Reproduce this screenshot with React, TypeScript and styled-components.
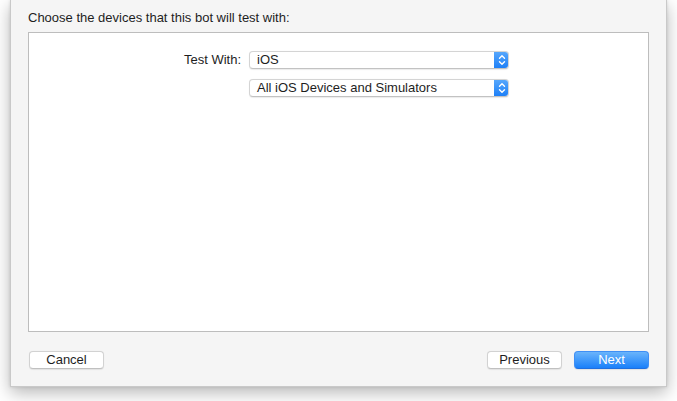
import { FC } from 'react'
import styled, { createGlobalStyle } from 'styled-components'

const GlobalStyle = createGlobalStyle`
  html, body {
    margin: 0;
    padding: 0;
    background: #ffffff;
  }
  body {
    font-family: 'Liberation Sans', Arial, sans-serif;
    color: #1e1e1e;
  }
`

interface PopupProps {
  value: string
}

const Stepper: FC = () => (
  <StepperBox>
    <svg width="8" height="12" viewBox="0 0 8 12" fill="none">
      <path d="M1.5 4.2 L4 1.7 L6.5 4.2" stroke="#fff" strokeWidth="1.4" strokeLinecap="round" strokeLinejoin="round" />
      <path d="M1.5 7.8 L4 10.3 L6.5 7.8" stroke="#fff" strokeWidth="1.4" strokeLinecap="round" strokeLinejoin="round" />
    </svg>
  </StepperBox>
)

const Popup: FC<PopupProps> = ({ value }) => (
  <PopupBox>
    <PopupText>{value}</PopupText>
    <Stepper />
  </PopupBox>
)

const App: FC = () => {
  return (
    <>
      <GlobalStyle />
      <Page>
        <Sheet>
          <Heading>Choose the devices that this bot will test with:</Heading>
          <Panel>
            <Form>
              <Label>Test With:</Label>
              <Popup value="iOS" />
              <span />
              <Popup value="All iOS Devices and Simulators" />
            </Form>
          </Panel>
          <Footer>
            <Button>Cancel</Button>
            <Spacer />
            <Button>Previous</Button>
            <Button primary>Next</Button>
          </Footer>
        </Sheet>
      </Page>
    </>
  )
}

const Page = styled.div`
  width: 677px;
  height: 401px;
  overflow: hidden;
  padding-left: 10px;
  box-sizing: border-box;
`

const Sheet = styled.div`
  width: 657px;
  height: 387px;
  box-sizing: border-box;
  display: flex;
  flex-direction: column;
  padding: 10px 17px 0 17px;
  background: #f5f5f5;
  border: 1px solid #c9c9c9;
  border-top: none;
  box-shadow: 0 6px 16px rgba(0, 0, 0, 0.28), 0 0 3px rgba(0, 0, 0, 0.12);
`

const Heading = styled.div`
  font-size: 13px;
  line-height: 16px;
  height: 16px;
  margin-bottom: 6px;
`

const Panel = styled.div`
  height: 300px;
  box-sizing: border-box;
  background: #ffffff;
  border: 1px solid #bdbdbd;
  padding-top: 18px;
`

const Form = styled.div`
  display: grid;
  grid-template-columns: 212px 260px;
  column-gap: 8px;
  row-gap: 10px;
  align-items: center;
`

const Label = styled.div`
  text-align: right;
  font-size: 13px;
  line-height: 18px;
`

const PopupBox = styled.div`
  display: flex;
  align-items: stretch;
  height: 18px;
  box-sizing: border-box;
  background: #ffffff;
  border: 1px solid #d4d4d4;
  border-bottom-color: #c2c2c2;
  border-radius: 4px;
  box-shadow: 0 0.5px 1px rgba(0, 0, 0, 0.08);
  overflow: hidden;
`

const PopupText = styled.span`
  flex: 1;
  padding-left: 7px;
  font-size: 13px;
  line-height: 16px;
  color: #1e1e1e;
`

const StepperBox = styled.span`
  width: 15px;
  display: flex;
  align-items: center;
  justify-content: center;
  margin: -1px -1px -1px 0;
  background: linear-gradient(#5aa9fc, #1b7ef7);
  border-radius: 0 4px 4px 0;
`

const Footer = styled.div`
  display: flex;
  align-items: center;
  gap: 12px;
  margin-top: 19px;
  padding-left: 1px;
`

const Spacer = styled.div`
  flex: 1;
`

const Button = styled.button<{ primary?: boolean }>`
  width: 75px;
  height: 18px;
  padding: 0;
  box-sizing: border-box;
  font-family: 'Liberation Sans', Arial, sans-serif;
  font-size: 13px;
  line-height: 16px;
  border-radius: 4px;
  color: ${p => (p.primary ? '#ffffff' : '#1e1e1e')};
  background: ${p => (p.primary ? 'linear-gradient(#6ab4fb, #1a80fa)' : '#ffffff')};
  border: 1px solid ${p => (p.primary ? '#3f8ff5' : '#d2d2d2')};
  border-bottom-color: ${p => (p.primary ? '#1f6fe0' : '#c0c0c0')};
  box-shadow: 0 0.5px 1px rgba(0, 0, 0, 0.08);
`

export default App
